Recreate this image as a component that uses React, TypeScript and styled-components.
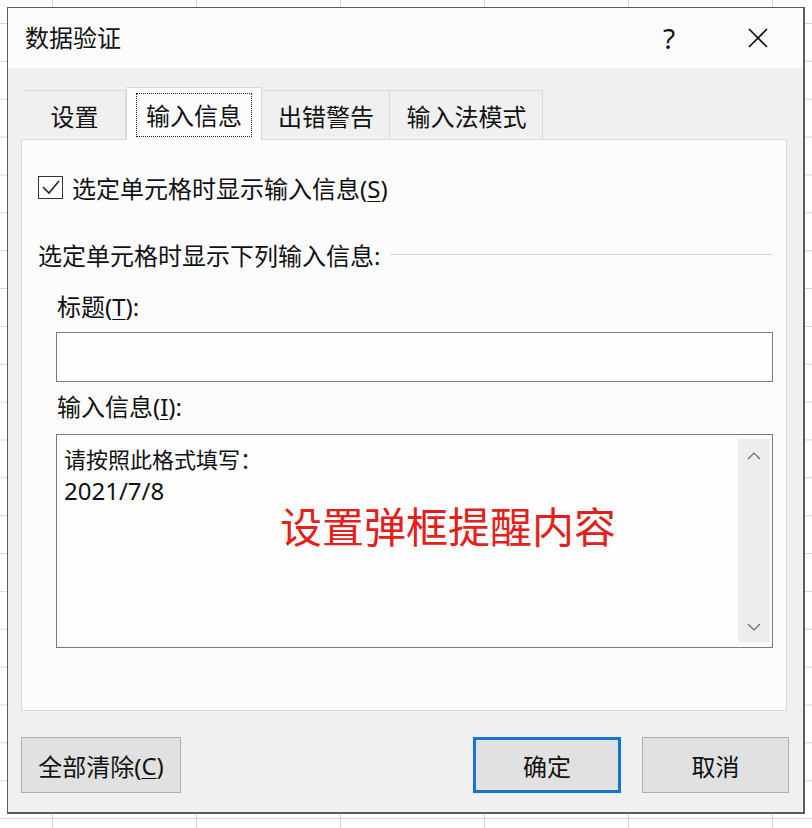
import React from "react";
import styled, { createGlobalStyle } from "styled-components";

const FONT = `"Noto Sans", "Noto Sans CJK SC", sans-serif`;

const Global = createGlobalStyle`
  html, body { margin: 0; padding: 0; width: 812px; height: 828px; overflow: hidden; }
  body {
    font-family: ${FONT};
    color: #111;
    background-color: #ffffff;
    background-image:
      linear-gradient(to right, #d6d6d6 1px, transparent 1px),
      linear-gradient(to bottom, #d6d6d6 1px, transparent 1px);
    background-size: 144px 37.86px;
    background-position: 52px 23px;
  }
`;

const Stage = styled.div`
  padding: 7px 0 0 7px;
`;

const Dialog = styled.div`
  box-sizing: border-box;
  width: 798px;
  height: 807px;
  border: 1px solid #5c5c5c;
  border-right-width: 2px;
  border-bottom-width: 2px;
  background: #f0f0f0;
  display: flex;
  flex-direction: column;
`;

const TitleBar = styled.div`
  height: 60px;
  flex: none;
  background: #fbfbfb;
  display: flex;
  align-items: center;
  padding-left: 17px;
`;

const TitleText = styled.div`
  flex: 1;
  font-size: 24px;
  line-height: 32px;
  color: #111;
`;

const TitleButton = styled.div<{ $mr?: number }>`
  width: 46px;
  height: 46px;
  display: flex;
  align-items: center;
  justify-content: center;
  margin-right: ${(p) => p.$mr ?? 0}px;
  font-size: 28px;
  line-height: 1;
  color: #111;
`;

const Body = styled.div`
  flex: 1;
  display: flex;
  flex-direction: column;
  padding: 20px 16px 0 13px;
`;

const TabRow = styled.div`
  display: flex;
  align-items: flex-end;
  padding-left: 2px;
  height: 52px;
  position: relative;
  z-index: 1;
  margin-bottom: -1px;
`;

const Tab = styled.div<{ $w: number; $active?: boolean }>`
  box-sizing: border-box;
  width: ${(p) => p.$w}px;
  height: ${(p) => (p.$active ? 53 : 49)}px;
  margin-bottom: ${(p) => (p.$active ? 0 : 1)}px;
  border: 1px solid #d9d9d9;
  border-bottom: none;
  border-left-color: ${(p) => (p.$active ? "#d9d9d9" : "transparent")};
  background: ${(p) => (p.$active ? "#fcfcfc" : "#f0f0f0")};
  display: flex;
  align-items: center;
  justify-content: center;
  font-size: 24px;
  padding: ${(p) => (p.$active ? "5px 9px 3px" : "0")};
  &:last-child { border-right-color: #d9d9d9; }
`;

const FocusBox = styled.div`
  flex: 1;
  align-self: stretch;
  display: flex;
  align-items: center;
  justify-content: center;
  border: 1px dotted #222;
  padding-bottom: 2px;
`;

const Panel = styled.div`
  box-sizing: border-box;
  height: 572px;
  border: 1px solid #d9d9d9;
  background: #fcfcfc;
  padding: 31px 13px 0 16px;
  display: flex;
  flex-direction: column;
`;

const CheckRow = styled.div`
  display: flex;
  align-items: center;
  height: 32px;
  font-size: 24px;
  gap: 9px;
`;

const Box = styled.div`
  box-sizing: border-box;
  width: 25px;
  height: 23px;
  border: 1.5px solid #333;
  background: #fff;
  display: flex;
  align-items: center;
  justify-content: center;
`;

const U = styled.span`
  text-decoration: underline;
  text-underline-offset: 3px;
  text-decoration-thickness: 1px;
`;

const SectionHeader = styled.div`
  display: flex;
  align-items: center;
  height: 32px;
  margin-top: 35px;
  font-size: 24px;
`;

const Rule = styled.div`
  flex: 1;
  height: 1px;
  background: #d2d2d2;
  margin-left: 10px;
`;

const Field = styled.div<{ $mt: number }>`
  margin-left: 18px;
  margin-top: ${(p) => p.$mt}px;
  display: flex;
  flex-direction: column;
`;

const Label = styled.div`
  height: 32px;
  line-height: 32px;
  font-size: 24px;
  padding-left: 1px;
`;

const Input = styled.div<{ $mt: number; $h: number }>`
  box-sizing: border-box;
  margin-top: ${(p) => p.$mt}px;
  height: ${(p) => p.$h}px;
  border: 1px solid #7a7a7a;
  background: #fdfdfd;
  position: relative;
  display: flex;
`;

const TextContent = styled.div`
  flex: 1;
  padding: 8px 0 0 7px;
  font-size: 22px;
  line-height: 32px;
  color: #111;
`;

const Digits = styled.span`
  font-size: 24px;
`;

const Annotation = styled.div`
  position: absolute;
  left: 223px;
  top: 62px;
  font-size: 42px;
  line-height: 56px;
  color: #e5201b;
  font-family: "Noto Sans CJK SC", sans-serif;
  white-space: nowrap;
`;

const ScrollBar = styled.div`
  width: 32px;
  margin: 4px 2px 5px 0;
  background: #ededed;
  display: flex;
  flex-direction: column;
  justify-content: space-between;
  align-items: center;
  padding: 13px 0 11px;
  box-sizing: border-box;
`;

const Footer = styled.div`
  display: flex;
  margin-top: 26px;
  margin-right: -2px;
  gap: 21px;
`;

const Button = styled.div<{ $w: number; $primary?: boolean }>`
  box-sizing: border-box;
  width: ${(p) => p.$w}px;
  height: 56px;
  background: #e1e1e1;
  border: ${(p) => (p.$primary ? "3px solid #1275d4" : "1px solid #adadad")};
  display: flex;
  align-items: center;
  justify-content: center;
  font-size: 24px;
  color: #111;
`;

const Spacer = styled.div`
  flex: 1;
`;

const Chevron = ({ up }: { up?: boolean }) => (
  <svg width="14" height="8" viewBox="0 0 14 8">
    <polyline
      points={up ? "1,7 7,1 13,7" : "1,1 7,7 13,1"}
      fill="none"
      stroke="#6a6a6a"
      strokeWidth="1.2"
    />
  </svg>
);

export default function App() {
  return (
    <>
      <Global />
      <Stage>
        <Dialog>
          <TitleBar>
            <TitleText>数据验证</TitleText>
            <TitleButton $mr={43}>?</TitleButton>
            <TitleButton $mr={22}>
              <svg width="22" height="22" viewBox="0 0 22 22">
                <line x1="2" y1="2" x2="20" y2="20" stroke="#111" strokeWidth="1.7" />
                <line x1="20" y1="2" x2="2" y2="20" stroke="#111" strokeWidth="1.7" />
              </svg>
            </TitleButton>
          </TitleBar>
          <Body>
            <TabRow>
              <Tab $w={103}>设置</Tab>
              <Tab $w={136} $active>
                <FocusBox>输入信息</FocusBox>
              </Tab>
              <Tab $w={128}>出错警告</Tab>
              <Tab $w={153}>输入法模式</Tab>
            </TabRow>
            <Panel>
              <CheckRow>
                <Box>
                  <svg width="20" height="17" viewBox="0 0 20 17">
                    <polyline points="2,8 8,14 18,2" fill="none" stroke="#222" strokeWidth="1.6" />
                  </svg>
                </Box>
                <span>
                  选定单元格时显示输入信息(<U>S</U>)
                </span>
              </CheckRow>
              <SectionHeader>
                <span>选定单元格时显示下列输入信息:</span>
                <Rule />
              </SectionHeader>
              <Field $mt={21}>
                <Label>
                  标题(<U>T</U>):
                </Label>
                <Input $mt={9} $h={50} />
              </Field>
              <Field $mt={9}>
                <Label>
                  输入信息(<U>I</U>):
                </Label>
                <Input $mt={11} $h={214}>
                  <TextContent>
                    请按照此格式填写：
                    <br />
                    <Digits>2021/7/8</Digits>
                  </TextContent>
                  <Annotation>设置弹框提醒内容</Annotation>
                  <ScrollBar>
                    <Chevron up />
                    <Chevron />
                  </ScrollBar>
                </Input>
              </Field>
            </Panel>
            <Footer>
              <Button $w={160}>
                全部清除(<U>C</U>)
              </Button>
              <Spacer />
              <Button $w={148} $primary>
                确定
              </Button>
              <Button $w={147}>取消</Button>
            </Footer>
          </Body>
        </Dialog>
      </Stage>
    </>
  );
}
